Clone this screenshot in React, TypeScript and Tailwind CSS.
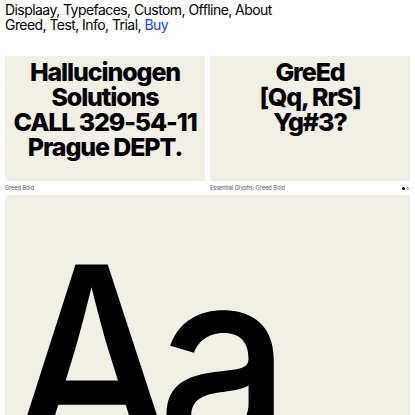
import React from 'react';

const nav1 = ['Displaay', 'Typefaces', 'Custom', 'Offline', 'About'];
const nav2 = ['Greed', 'Test', 'Info', 'Trial'];

function Card({ lines }: { lines: string[] }) {
  return (
    <div className="h-[125px] bg-[#f2f0e6] pt-[4px] flex flex-col items-center overflow-hidden">
      {lines.map((l) => (
        <div key={l} className="text-[25px] leading-[25px] font-extrabold tracking-[-0.045em] text-black whitespace-nowrap">
          {l}
        </div>
      ))}
    </div>
  );
}

export default function App() {
  return (
    <div className="w-[415px] h-[415px] overflow-hidden bg-white text-black" style={{ fontFamily: 'Inter, "Liberation Sans", sans-serif' }}>
      <nav className="px-[5px] pt-[3px] text-[14px] leading-[14.5px] tracking-[-0.04em]">
        <div>{nav1.join(', ')}</div>
        <div>
          {nav2.join(', ')}, <a className="text-[#1f3cff]">Buy</a>
        </div>
      </nav>

      <div className="px-[5px] mt-[24px] grid grid-cols-2 gap-x-[5px]">
        <div>
          <Card lines={['Hallucinogen', 'Solutions', 'CALL 329-54-11', 'Prague DEPT.']} />
          <div className="h-[14px] flex items-center text-[5.5px] text-[#555]">Greed Bold</div>
        </div>
        <div>
          <Card lines={['GreEd', '[Qq, RrS]', 'Yg#3?']} />
          <div className="h-[14px] flex items-center justify-between text-[5.5px] text-[#555]">
            <span>Essential Glyphs: Greed Bold</span>
            <span className="flex items-center gap-[1px] pr-[1px]">
              <span className="w-[3px] h-[3px] rounded-full bg-black" />
              <span className="w-[3px] h-[3px] rounded-full border-[0.5px] border-[#888]" />
            </span>
          </div>
        </div>
      </div>

      <div className="mx-[5px] h-[260px] bg-[#f2f0e6] overflow-hidden">
        <div className="pl-[4px] pt-[34px] text-[262px] leading-[262px] font-medium whitespace-nowrap tracking-[-0.08em] origin-left scale-x-[0.9]">
          Aa
        </div>
      </div>
    </div>
  );
}
